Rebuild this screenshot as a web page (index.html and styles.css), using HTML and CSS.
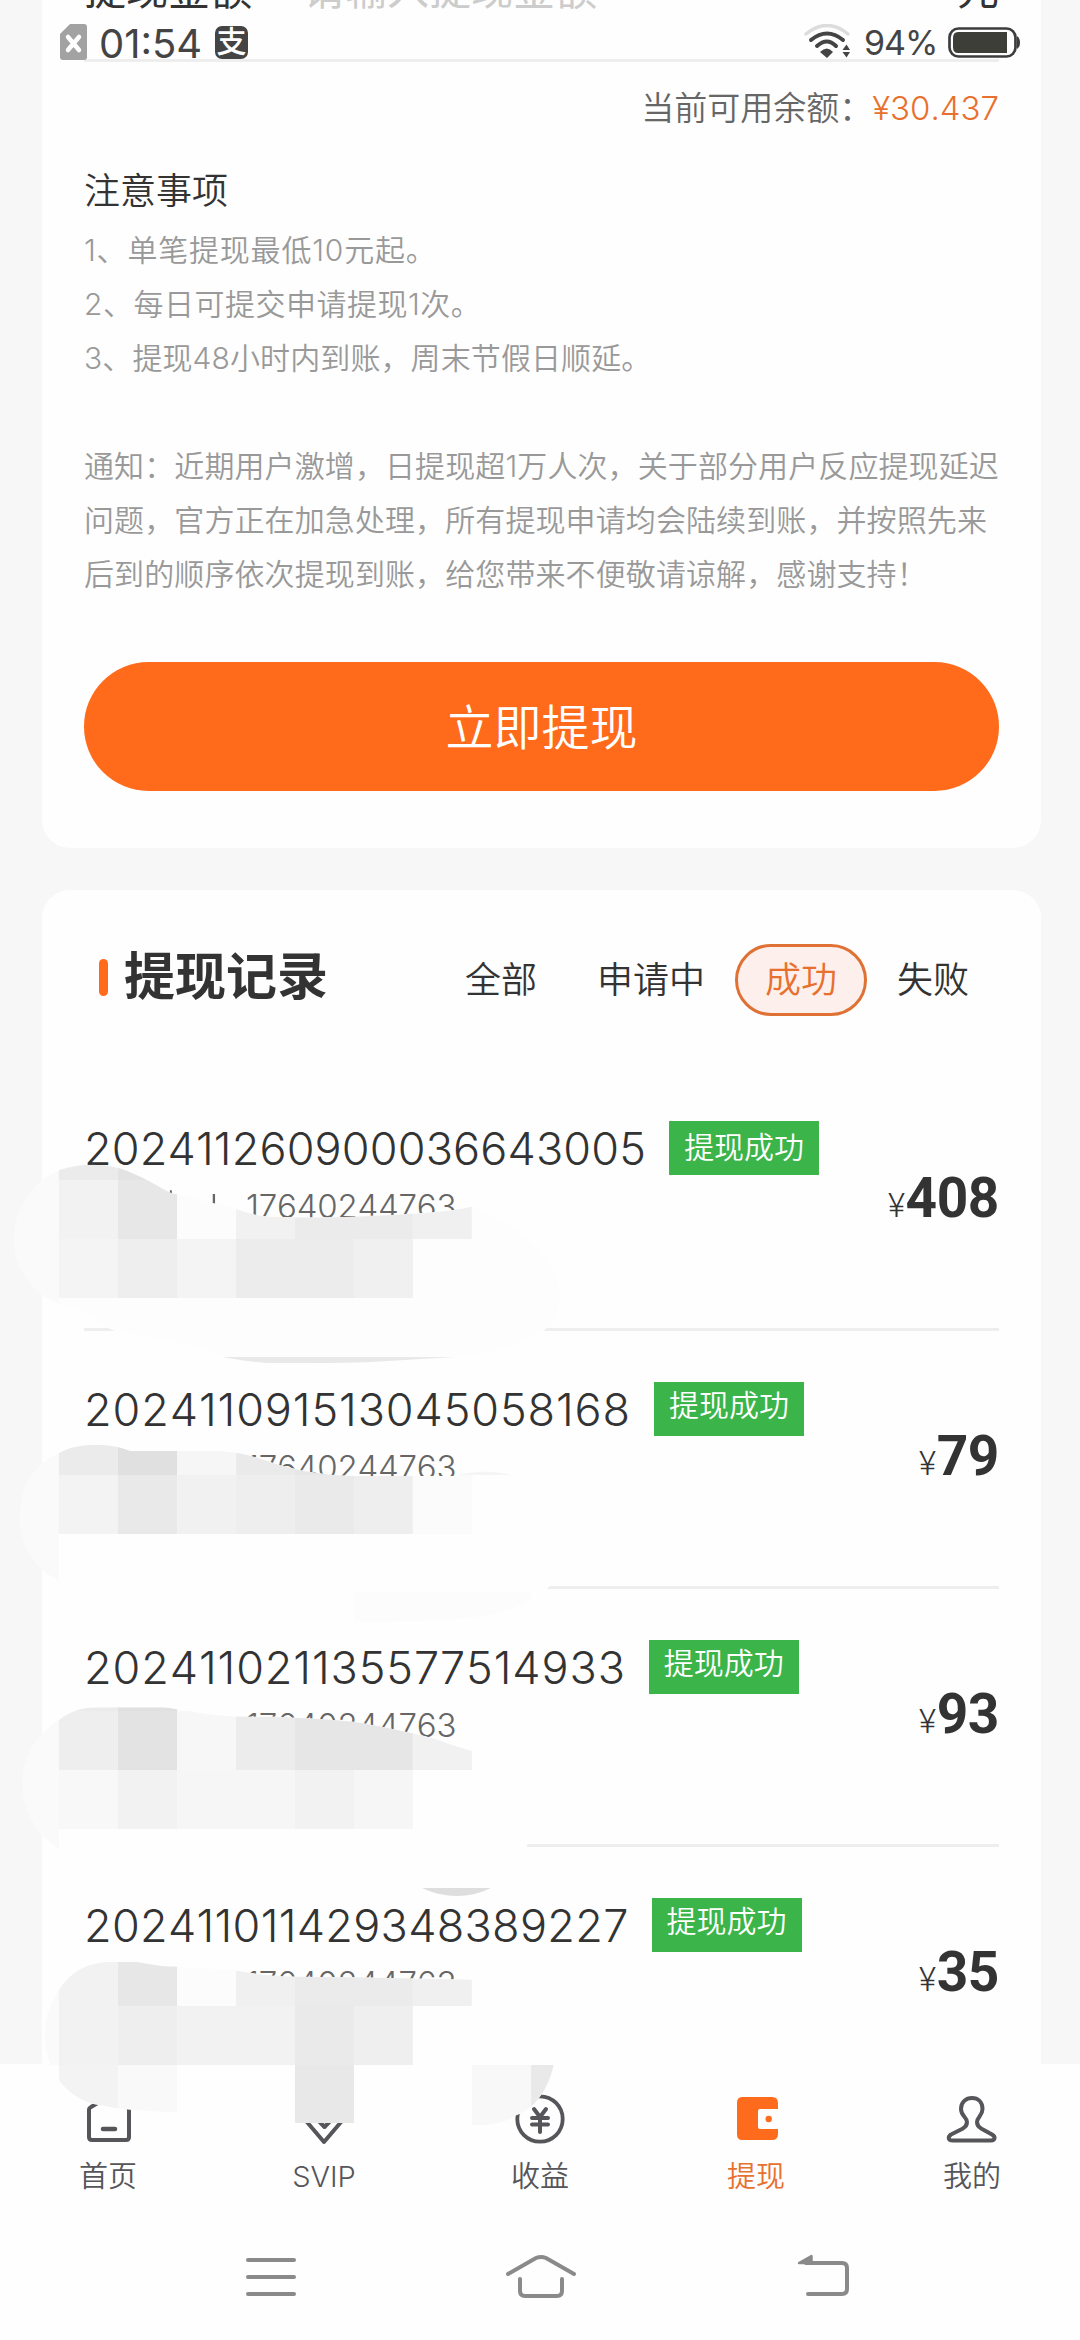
FILE: index.html
```html
<!DOCTYPE html>
<html lang="zh-CN">
<head>
<meta charset="utf-8">
<title>提现</title>
<link rel="stylesheet" href="styles.css">
</head>
<body>
<div class="app">
  <header class="status">
    <svg class="sim" width="27" height="36" viewBox="0 0 27 36"><path d="M10 0H24Q27 0 27 3V33Q27 36 24 36H3Q0 36 0 33V10Z" fill="#a2a2a2"/><path d="M8 13L19 26M19 13L8 26" stroke="#fff" stroke-width="4.5" stroke-linecap="round"/></svg>
    <span class="time">01:54</span>
    <span class="pay">支</span>
    <svg class="wifi" width="47" height="36" viewBox="0 0 47 36" fill="none" stroke-linecap="round"><path d="M2 10Q23 -7 44 10" stroke="#dcdcdc" stroke-width="3.5"/><path d="M7 16Q23 3 39 16M13 22Q23 13 32 22" stroke="#444" stroke-width="4"/><path d="M16 28Q23 21 29 28L23 34Z" fill="#444"/><path d="M38.500 26L42.500 20.500 46 26ZM38.500 28L42.500 33.500 46 28Z" fill="#444"/></svg>
    <span class="percent">94%</span>
    <svg class="battery" width="73" height="31" viewBox="0 0 73 31"><rect x="1.500" y="1.500" width="66" height="28" rx="9" fill="#fff" stroke="#3d3d3d" stroke-width="2.700"/><path d="M10 5H59V26H10Q5 26 5 20V11Q5 5 10 5Z" fill="#3e3e38"/><path d="M69 9Q72 11 72 15.500T69 22Z" fill="#3d3d3d"/></svg>
  </header>

  <main class="content">
    <section class="card form">
      <div class="amount-row"><span class="label">提现金额</span><span class="hint">请输入提现金额</span><span class="unit">元</span></div>
      <p class="balance">当前可用余额：<b>¥30.437</b></p>
      <h2 class="notice-title">注意事项</h2>
      <div class="notes">
        <p class="wider">1、单笔提现最低10元起。</p>
        <p class="wide">2、每日可提交申请提现1次。</p>
        <p>3、提现48小时内到账，周末节假日顺延。</p>
        <p class="notice">通知：近期用户激增，日提现超1万人次，关于部分用户反应提现延迟<br>问题，官方正在加急处理，所有提现申请均会陆续到账，并按照先来<br>后到的顺序依次提现到账，给您带来不便敬请谅解，感谢支持！</p>
      </div>
      <button class="submit">立即提现</button>
    </section>

    <section class="card records">
      <div class="records-head">
        <h2 class="records-title">提现记录</h2>
        <nav class="filters"><span>全部</span><span>申请中</span><span class="on">成功</span><span>失败</span></nav>
      </div>
      <article class="record first">
        <div class="info"><div class="line"><span class="order">202411260900036643005</span><span class="badge">提现成功</span></div><div class="phone">17640244763</div></div>
        <div class="sum"><i>¥</i>408</div>
      </article>
      <article class="record">
        <div class="info"><div class="line"><span class="order">202411091513045058168</span><span class="badge">提现成功</span></div><div class="phone">17640244763</div></div>
        <div class="sum"><i>¥</i>79</div>
      </article>
      <article class="record">
        <div class="info"><div class="line"><span class="order">202411021135577514933</span><span class="badge">提现成功</span></div><div class="phone">17640244763</div></div>
        <div class="sum"><i>¥</i>93</div>
      </article>
      <article class="record">
        <div class="info"><div class="line"><span class="order">202411011429348389227</span><span class="badge">提现成功</span></div><div class="phone">17640244763</div></div>
        <div class="sum"><i>¥</i>35</div>
      </article>
    </section>
  </main>

  <footer class="dock">
    <nav class="tabs">
      <a class="tab"><svg width="56" height="56" viewBox="80 2091 56 56" fill="none" stroke="#55555a" stroke-width="4" stroke-linejoin="round" stroke-linecap="round"><path d="M89 2110Q89 2108 91 2107L106 2098Q109 2096 112 2098L127 2107Q129 2108 129 2110V2137Q129 2140 126 2140H92Q89 2140 89 2137Z"/><path d="M103 2129H115" stroke-width="4.500"/></svg>首页</a>
      <a class="tab"><svg width="56" height="56" viewBox="296 2091 56 56" fill="none" stroke="#55555a" stroke-width="4" stroke-linejoin="round" stroke-linecap="round"><path d="M310 2101H338L347 2115 324 2142 301 2115Z"/><path d="M315 2117L324.500 2127 334 2117"/></svg>SVIP</a>
      <a class="tab"><svg width="56" height="56" viewBox="512 2091 56 56" fill="none" stroke="#55555a" stroke-width="3.800" stroke-linecap="round" stroke-linejoin="round"><circle cx="540" cy="2119" r="22.700"/><path d="M534 2109L540 2117 546 2109M532 2118H548M532 2124.500H548M540 2117V2132" stroke-width="4"/></svg>收益</a>
      <a class="tab on"><svg width="56" height="56" viewBox="728 2091 56 56"><path d="M742 2097H772Q778 2097 778 2103V2109H760Q758 2109 758 2111V2127Q758 2129 760 2129H778V2134Q778 2140 772 2140H742Q737 2140 737 2134V2103Q737 2097 742 2097Z" fill="#ff6b1c"/><circle cx="768.700" cy="2119" r="3.200" fill="#ff6b1c"/></svg>提现</a>
      <a class="tab"><svg width="56" height="56" viewBox="944 2091 56 56" fill="none" stroke="#55555a" stroke-width="4" stroke-linejoin="round"><path d="M967 2122C967 2117 961 2116 961 2109C961 2102 966 2098 972 2098S982.500 2102 982.500 2109C982.500 2116 977 2117 977 2122C977 2126 979 2127 982 2129L992 2134.500C996 2137 995 2140.500 991 2140.500H953C948 2140.500 947.500 2137 951 2134.500L962 2129C965 2127 967 2126 967 2122Z"/></svg>我的</a>
    </nav>
    <div class="system" aria-hidden="true">
      <svg width="56" height="46" viewBox="243 2254 56 46" class="key"><path d="M248 2260H294M248 2277H294M248 2294H294"/></svg>
      <svg width="74" height="46" viewBox="504 2254 74 46" class="key home"><path d="M508 2274L536 2258Q541 2256 546 2258L574 2274M520 2279V2291Q520 2296 525 2296H557Q562 2296 562 2291V2279"/></svg>
      <svg width="56" height="46" viewBox="796 2254 56 46" class="key"><path d="M806 2263H842Q847 2263 847 2268V2289Q847 2294 842 2294H808"/><path d="M799 2263L811.500 2256V2263Z" fill="#8a8a8a" stroke-width="2.500"/></svg>
    </div>
  </footer>

  <svg class="masks" width="1080" height="2340" viewBox="0 0 1080 2340" aria-hidden="true">
    <defs>
      <clipPath id="m1"><path d="M154 180C230 152 300 165 340 187C390 210 420 235 445 248L600 292C640 305 670 320 710 320Q820 325 925 320C1000 315 1150 312 1233 290C1350 330 1463 450 1463 565C1460 610 1440 645 1420 663C1340 710 1250 740 1180 742L960 757Q850 760 720 760Q640 755 585 742C500 700 460 695 400 685L300 663C250 640 240 610 210 600Q150 585 110 555C60 510 36 450 36 390C36 310 70 250 110 210Z"/></clipPath>
      <clipPath id="m2"><path d="M154 250C190 225 230 224 270 225Q315 230 340 243H560C620 245 650 255 690 270C750 295 830 316 925 318H1190C1230 303 1290 300 1335 315C1400 340 1467 430 1467 510C1467 590 1450 630 1432 655L1360 705C1300 740 1200 755 925 755C800 750 700 715 550 680H240L154 635 110 600C70 550 50 500 52 440C55 350 80 290 154 250Z"/></clipPath>
      <clipPath id="m3"><path d="M154 270C190 240 220 232 260 232H420C450 234 480 242 520 248C570 258 620 262 720 260C800 265 900 268 960 282C1060 305 1130 320 1175 343L1233 363C1330 430 1383 520 1383 600C1380 700 1330 750 1282 774C1230 806 1160 806 1103 774C1050 740 950 705 830 700L600 690C500 690 420 670 360 670C280 690 220 690 154 657L110 617C70 560 58 500 58 460C60 370 100 310 154 270Z"/></clipPath>
      <clipPath id="m4"><path d="M154 330C190 265 240 247 290 245H350C390 250 400 258 463 260L610 270C650 278 700 290 771 290L925 292 1233 299C1350 330 1440 450 1447 555C1430 640 1390 690 1350 705C1310 735 1270 737 1233 735L1200 729H771L700 696H463Q380 696 308 685L245 672Q190 655 154 600V555H132C105 480 115 400 154 330Z"/></clipPath>
    </defs>
    <g transform="translate(0 1110) scale(.38265 .33333)">
      <path d="M444 241h5v9h-5zM556 252h6v30h-6z" fill="#666"/>
      <g clip-path="url(#m1)"><path d="M0 0H154V840H0Z" fill="#fafafa"/><path d="M154 0H1568V840H154Z" fill="#fdfdfd"/>
        <path d="M154 0h154v210H154z" fill="#ebebeb"/><path d="M308 0h155v210H308z" fill="#e3e3e3"/>
        <path d="M154 210h154v177H154z" fill="#f2f2f2"/><path d="M308 210h155v177H308z" fill="#e7e7e7"/><path d="M463 210h154v177H463z" fill="#fcfcfc"/><path d="M617 210h154v177H617z" fill="#f1f1f1"/><path d="M771 210h308v177H771z" fill="#ebebeb"/><path d="M1079 210h154v177h-154z" fill="#f0f0f0"/>
        <path d="M154 387h154v177H154zM463 387h154v177H463z" fill="#f4f4f4"/><path d="M308 387h155v177H308z" fill="#eee"/><path d="M617 387h308v177H617z" fill="#ececec"/><path d="M925 387h154v177H925z" fill="#f0f0f0"/><path d="M463 741h770v40H463z" fill="#e9e9e9"/></g>
    </g>
    <g transform="translate(0 1370) scale(.38265 .33333)" clip-path="url(#m2)">
      <path d="M0 0H154V840H0Z" fill="#fafafa"/><path d="M154 0H1568V840H154Z" fill="#fefefe"/>
      <path d="M154 0h154v315H154z" fill="#ebebeb"/><path d="M308 0h155v315H308z" fill="#e0e0e0"/><path d="M463 0h154v315H463z" fill="#f6f6f6"/><path d="M617 0h154v315H617z" fill="#eaeaea"/><path d="M771 0h154v315H771z" fill="#e7e7e7"/><path d="M1079 0h309v315h-309z" fill="#f5f5f5"/>
      <path d="M154 315h154v177H154z" fill="#f3f3f3"/><path d="M308 315h155v177H308z" fill="#e9e9e9"/><path d="M463 315h154v177H463z" fill="#f1f1f1"/><path d="M617 315h154v177H617zM925 315h154v177H925z" fill="#eee"/><path d="M771 315h154v177H771z" fill="#eaeaea"/><path d="M1079 315h154v177h-154z" fill="#fbfbfb"/><path d="M925 668h463v100H925z" fill="#fcfcfc"/>
    </g>
    <g transform="translate(0 1630) scale(.38265 .33333)" clip-path="url(#m3)">
      <path d="M0 0H154V840H0Z" fill="#fafafa"/><path d="M154 0H1568V840H154Z" fill="#fefefe"/>
      <path d="M154 0h154v243H154z" fill="#ebebeb"/><path d="M308 0h155v243H308z" fill="#e0e0e0"/>
      <path d="M154 243h154v177H154z" fill="#eee"/><path d="M308 243h155v177H308z" fill="#e3e3e3"/><path d="M463 243h154v177H463z" fill="#f7f7f7"/><path d="M617 243h154v177H617z" fill="#ececec"/><path d="M771 243h308v177H771z" fill="#e6e6e6"/><path d="M1079 243h154v177h-154z" fill="#f1f1f1"/>
      <path d="M154 420h154v177H154z" fill="#f8f8f8"/><path d="M308 420h155v177H308zM771 420h154v177H771z" fill="#f2f2f2"/><path d="M463 420h308v177H463zM925 420h154v177H925z" fill="#f6f6f6"/><path d="M1079 774h309v40h-309z" fill="#dedede"/>
    </g>
    <g transform="translate(0 1880) scale(.38265 .33333)" clip-path="url(#m4)">
      <path d="M0 0H154V840H0Z" fill="#fafafa"/><path d="M154 0H1568V840H154Z" fill="#fefefe"/>
      <path d="M154 0h154v555H154z" fill="#f2f2f2"/><path d="M308 0h155v378H308z" fill="#e7e7e7"/><path d="M463 0h154v378H463z" fill="#fcfcfc"/><path d="M617 0h154v378H617z" fill="#f0f0f0"/><path d="M771 0h308v378H771z" fill="#ebebeb"/><path d="M1079 0h154v378h-154z" fill="#f0f0f0"/>
      <path d="M308 378h155v177H308z" fill="#eee"/><path d="M463 378h308v177H463z" fill="#f2f2f2"/><path d="M771 378h154v177H771z" fill="#eaeaea"/><path d="M925 378h154v177H925z" fill="#efefef"/>
      <path d="M154 555h154v177H154z" fill="#f3f3f3"/><path d="M308 555h155v177H308z" fill="#f9f9f9"/><path d="M771 555h154v174H771z" fill="#e8e8e8"/><path d="M1233 555h155v200h-155z" fill="#f8f8f8"/><path d="M1388 555h100v200h-100z" fill="#e9e9e9"/>
    </g>
  </svg>
</div>
</body>
</html>
```
FILE: styles.css
```css
* { box-sizing: border-box; margin: 0; padding: 0; }
body {
  font-family: Inter, "Noto Sans CJK SC", sans-serif;
  font-weight: 350;
  font-kerning: none;
  color: #333;
  background: #f7f7f7;
}
.app { position: relative; width: 1080px; height: 2340px; overflow: hidden; background: #f7f7f7; }

.status {
  position: absolute; z-index: 3; top: 24px; left: 60px; right: 59px; height: 36px;
  display: flex; align-items: center; color: #444; line-height: 36px; font-weight: 400;
}
.time { margin-left: 12px; width: 104px; font-size: 40px; white-space: nowrap; position: relative; top: 2px; }
.pay {
  margin-left: 12px; width: 33px; height: 33px; border-radius: 7px; background: #444; color: #fff;
  font-size: 30px; line-height: 31px; text-align: center; font-weight: 500;
}
.wifi { margin-left: auto; }
.percent { margin-left: 13px; width: 72px; margin-right: 12px; font-size: 34px; letter-spacing: -1px; position: relative; top: 1px; }
.battery { flex: none; }

.content { height: 2064px; padding: 0 39px 0 42px; overflow: hidden; }
.card { background: #fefefe; border-radius: 28px; }
.form { margin-top: -60px; height: 908px; padding: 0 42px; }
.amount-row {
  height: 122px; padding-bottom: 27px; border-bottom: 3px solid #eee;
  display: flex; align-items: center; font-size: 42px; font-weight: 400;
}
.hint { margin-left: 51px; color: #ccc; }
.unit { margin-left: auto; }
.balance { margin-top: 22px; line-height: 48px; text-align: right; font-size: 33px; color: #666; }
.balance b { font-weight: 350; color: #e8702e; }
.notice-title { margin-top: 32px; line-height: 54px; font-size: 36px; font-weight: 350; }
.notes { margin-top: 5px; font-size: 30px; line-height: 54px; color: #999; white-space: nowrap; letter-spacing: 0.1px; }
.wide { letter-spacing: 0.5px; }
.wider { letter-spacing: 0.8px; }
.notice { margin-top: 54px; }
.submit {
  display: block; width: 100%; height: 129px; margin-top: 61px; padding-bottom: 6px; border: 0; border-radius: 65px;
  background: #ff6a1b; color: #fff; font: inherit; font-size: 48px;
}

.records { margin-top: 42px; padding: 54px 42px 0; height: 1300px; }
.records-head { display: flex; align-items: center; height: 72px; }
.records-title { display: flex; align-items: center; gap: 16px; font-size: 51px; font-weight: 700; line-height: 60px; padding-left: 15px; margin-top: -6px; }
.records-title::before { content: ""; width: 9px; height: 37px; border-radius: 5px; background: #ff6a1b; }
.filters { display: flex; margin-left: auto; font-size: 36px; line-height: 66px; }
.filters span { height: 72px; padding: 0 27px; border: 3px solid transparent; border-radius: 36px; }
.filters .on { color: #e8702e; border-color: #df7135; background: #fdf0ec; }

.record { display: flex; justify-content: space-between; height: 258px; padding-top: 51px; border-bottom: 3px solid #eee; }
.record.first { height: 315px; padding-top: 105px; }
.line { display: flex; align-items: center; height: 54px; }
.order { font-size: 45px; letter-spacing: 0.9px; }
.first .order { letter-spacing: 0.15px; }
.record:last-child .order { letter-spacing: 0.3px; }
.badge { margin-left: 23px; width: 150px; height: 54px; background: #3bb44a; color: #fff; font-size: 30px; line-height: 46px; padding-left: 15px; }
.first .badge { line-height: 52px; }
.phone { margin-top: 10px; padding-left: 162px; font-size: 33px; line-height: 42px; color: #666; letter-spacing: -0.2px; }
.sum { align-self: flex-start; padding-top: 41px; font: 700 55px/66px Roboto, sans-serif; letter-spacing: -0.4px; }
.first .sum { padding-top: 44px; }
.sum i { font: 300 33px Roboto, sans-serif; margin-right: 1px; }

.dock { position: relative; height: 276px; background: #fefefe; }
.tabs { display: flex; height: 138px; padding-top: 27px; }
.tab { flex: 1; display: flex; flex-direction: column; align-items: center; gap: 9px; font-size: 29px; line-height: 42px; color: #55555a; }
.tab.on { color: #e8702e; }
.system { display: flex; justify-content: space-between; padding: 52px 228px 0 243px; }
.key { fill: none; stroke: #8a8a8a; stroke-width: 4; stroke-linecap: round; stroke-linejoin: round; }
.key.home { margin-right: 13px; }
.masks { position: absolute; z-index: 2; left: 0; top: 0; pointer-events: none; }
```
